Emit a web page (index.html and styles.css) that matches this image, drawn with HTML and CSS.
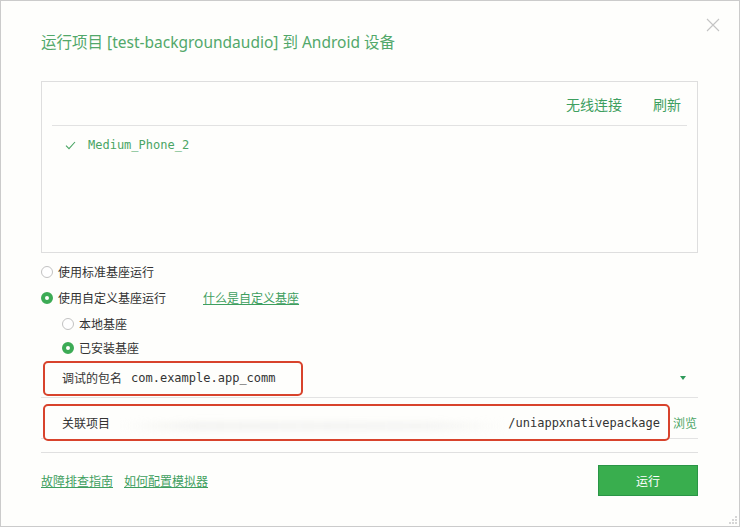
FILE: index.html
```html
<!DOCTYPE html>
<html lang="zh-CN">
<head>
  <meta charset="UTF-8" />
  <meta name="viewport" content="width=device-width, initial-scale=1.0"/>
  <title>运行项目到 Android 设备</title>
  <link rel="stylesheet" href="styles.css">
</head>
<body>
  <div class="dialog">
    <button class="close-btn" title="关闭">
      <svg width="14" height="14" viewBox="0 0 14 14"><path d="M1 1L13 13M13 1L1 13" stroke="#c4c4c4" stroke-width="1.1" fill="none"/></svg>
    </button>

    <div class="dialog-title">运行项目 [test-backgroundaudio] 到 Android 设备</div>

    <div class="device-box">
      <div class="device-head">
        <a class="head-link">无线连接</a>
        <a class="head-link">刷新</a>
      </div>
      <div class="device-list">
        <div class="device-item">
          <svg class="check" width="11" height="9" viewBox="0 0 11 9"><path d="M1 4.6L4 7.6L10 1" stroke="#4aa564" stroke-width="1.1" fill="none"/></svg>
          <span>Medium_Phone_2</span>
        </div>
      </div>
    </div>

    <div class="options">
      <label class="radio-row"><span class="radio"></span>使用标准基座运行</label>
      <label class="radio-row"><span class="radio checked"></span>使用自定义基座运行<a class="help-link">什么是自定义基座</a></label>
      <label class="radio-row sub"><span class="radio"></span>本地基座</label>
      <label class="radio-row sub last"><span class="radio checked"></span>已安装基座</label>
    </div>

    <div class="field-row">
      <div class="mark pkg">
        <span class="field-label">调试的包名</span>
        <span class="mono">com.example.app_comm</span>
      </div>
      <span class="caret"></span>
    </div>

    <div class="field-row project">
      <div class="mark proj">
        <span class="field-label">关联项目</span>
        <span class="blurred"></span>
        <span class="mono">/uniappxnativepackage</span>
      </div>
      <a class="browse">浏览</a>
    </div>

    <div class="footer">
      <div class="footer-links">
        <a>故障排查指南</a>
        <a>如何配置模拟器</a>
      </div>
      <button class="run-btn">运行</button>
    </div>

    <svg class="grip" width="8" height="8" viewBox="0 0 8 8">
      <rect x="6" y="0" width="2" height="2" fill="#d6d6d6"/>
      <rect x="3" y="3" width="2" height="2" fill="#d6d6d6"/>
      <rect x="6" y="3" width="2" height="2" fill="#d6d6d6"/>
      <rect x="0" y="6" width="2" height="2" fill="#d6d6d6"/>
      <rect x="3" y="6" width="2" height="2" fill="#d6d6d6"/>
      <rect x="6" y="6" width="2" height="2" fill="#d6d6d6"/>
    </svg>
  </div>
</body>
</html>
```

FILE: styles.css
```css
body {
  margin: 0;
  padding: 0;
  background: #fefefc;
  font-family: 'Noto Sans', 'Noto Sans CJK SC', sans-serif;
  color: #333;
}

a {
  cursor: pointer;
}

.dialog {
  position: relative;
  width: 740px;
  height: 527px;
  box-sizing: border-box;
  border: 1px solid #cbcbcb;
  background: #fefefc;
  padding: 0 41px 0 40px;
}

.close-btn {
  position: absolute;
  top: 17px;
  right: 19px;
  border: none;
  background: none;
  padding: 0;
  width: 14px;
  height: 14px;
  cursor: pointer;
}

.close-btn svg {
  display: block;
}

.dialog-title {
  padding-top: 31px;
  font-size: 15.5px;
  line-height: 20px;
  color: #52a86a;
}

.device-box {
  margin-top: 29px;
  height: 172px;
  box-sizing: border-box;
  border: 1px solid #dedede;
  padding: 0 10px;
}

.device-head {
  display: flex;
  justify-content: flex-end;
  align-items: center;
  gap: 31px;
  height: 43px;
  padding-right: 6px;
  border-bottom: 1px solid #e2e2e2;
}

.head-link {
  font-size: 14px;
  color: #3e9f5f;
}

.device-list {
  padding: 11px 0 0 13px;
}

.device-item {
  display: flex;
  align-items: center;
  height: 16px;
  color: #4aa564;
  font-family: 'DejaVu Sans Mono', monospace;
  font-size: 12px;
}

.device-item .check {
  margin-right: 12px;
}

.options {
  padding-top: 6px;
}

.radio-row {
  display: flex;
  align-items: center;
  height: 26px;
  font-size: 12px;
  color: #333;
}

.radio-row.sub {
  padding-left: 21px;
}

.radio-row.last {
  height: 22px;
}

.radio {
  width: 12px;
  height: 12px;
  box-sizing: border-box;
  border: 1px solid #c2c2c2;
  border-radius: 50%;
  background: #fff;
  margin-right: 5px;
}

.radio.checked {
  border: 4px solid #3cab55;
  background: #fff;
}

.help-link {
  margin-left: 37px;
  color: #3e9f5f;
  text-decoration: underline;
}

.field-row {
  display: flex;
  align-items: center;
  height: 38px;
  border-bottom: 1px solid #e3e3e3;
}

.field-row.project {
  height: 40px;
  align-items: flex-start;
}

.mark {
  display: flex;
  align-items: center;
  box-sizing: border-box;
  border: 2px solid #d8432c;
  border-radius: 5px;
  background: #fefefc;
  margin-left: 2px;
  padding-left: 17px;
  font-size: 12px;
}

.mark.pkg {
  width: 260px;
  height: 35px;
}

.mark.proj {
  width: 627px;
  height: 37px;
  margin-top: 6px;
  padding-right: 8px;
}

.field-label {
  color: #333;
  margin-right: 9px;
}

.mono {
  font-family: 'DejaVu Sans Mono', monospace;
  font-size: 12px;
  color: #333;
}

.blurred {
  flex: 1;
  height: 8px;
  margin: 6px 0 0 0;
  background: linear-gradient(90deg, rgba(232, 232, 230, 0) 0%, rgba(232, 232, 230, 0.5) 20%, rgba(234, 234, 232, 0.45) 80%, rgba(232, 232, 230, 0) 100%);
  filter: blur(3px);
}

.caret {
  margin-left: auto;
  margin-right: 12px;
  width: 0;
  height: 0;
  border-left: 3px solid transparent;
  border-right: 3px solid transparent;
  border-top: 4px solid #2e9a5a;
}

.browse {
  margin: 16px 0 0 3px;
  font-size: 12px;
  color: #4aa564;
}

.footer {
  margin-top: 13px;
  border-top: 1px solid #e0e0e0;
  padding-top: 12px;
  display: flex;
  justify-content: space-between;
  align-items: center;
}

.footer-links {
  display: flex;
  gap: 11px;
}

.footer-links a {
  font-size: 12px;
  color: #3e9f5f;
  text-decoration: underline;
}

.run-btn {
  width: 100px;
  height: 31px;
  border: 1px solid #2a9546;
  background: #39ae4e;
  color: #fff;
  font-family: 'Noto Sans CJK SC', sans-serif;
  font-size: 12px;
  cursor: pointer;
}

.grip {
  position: absolute;
  right: 2px;
  bottom: 2px;
}
```
